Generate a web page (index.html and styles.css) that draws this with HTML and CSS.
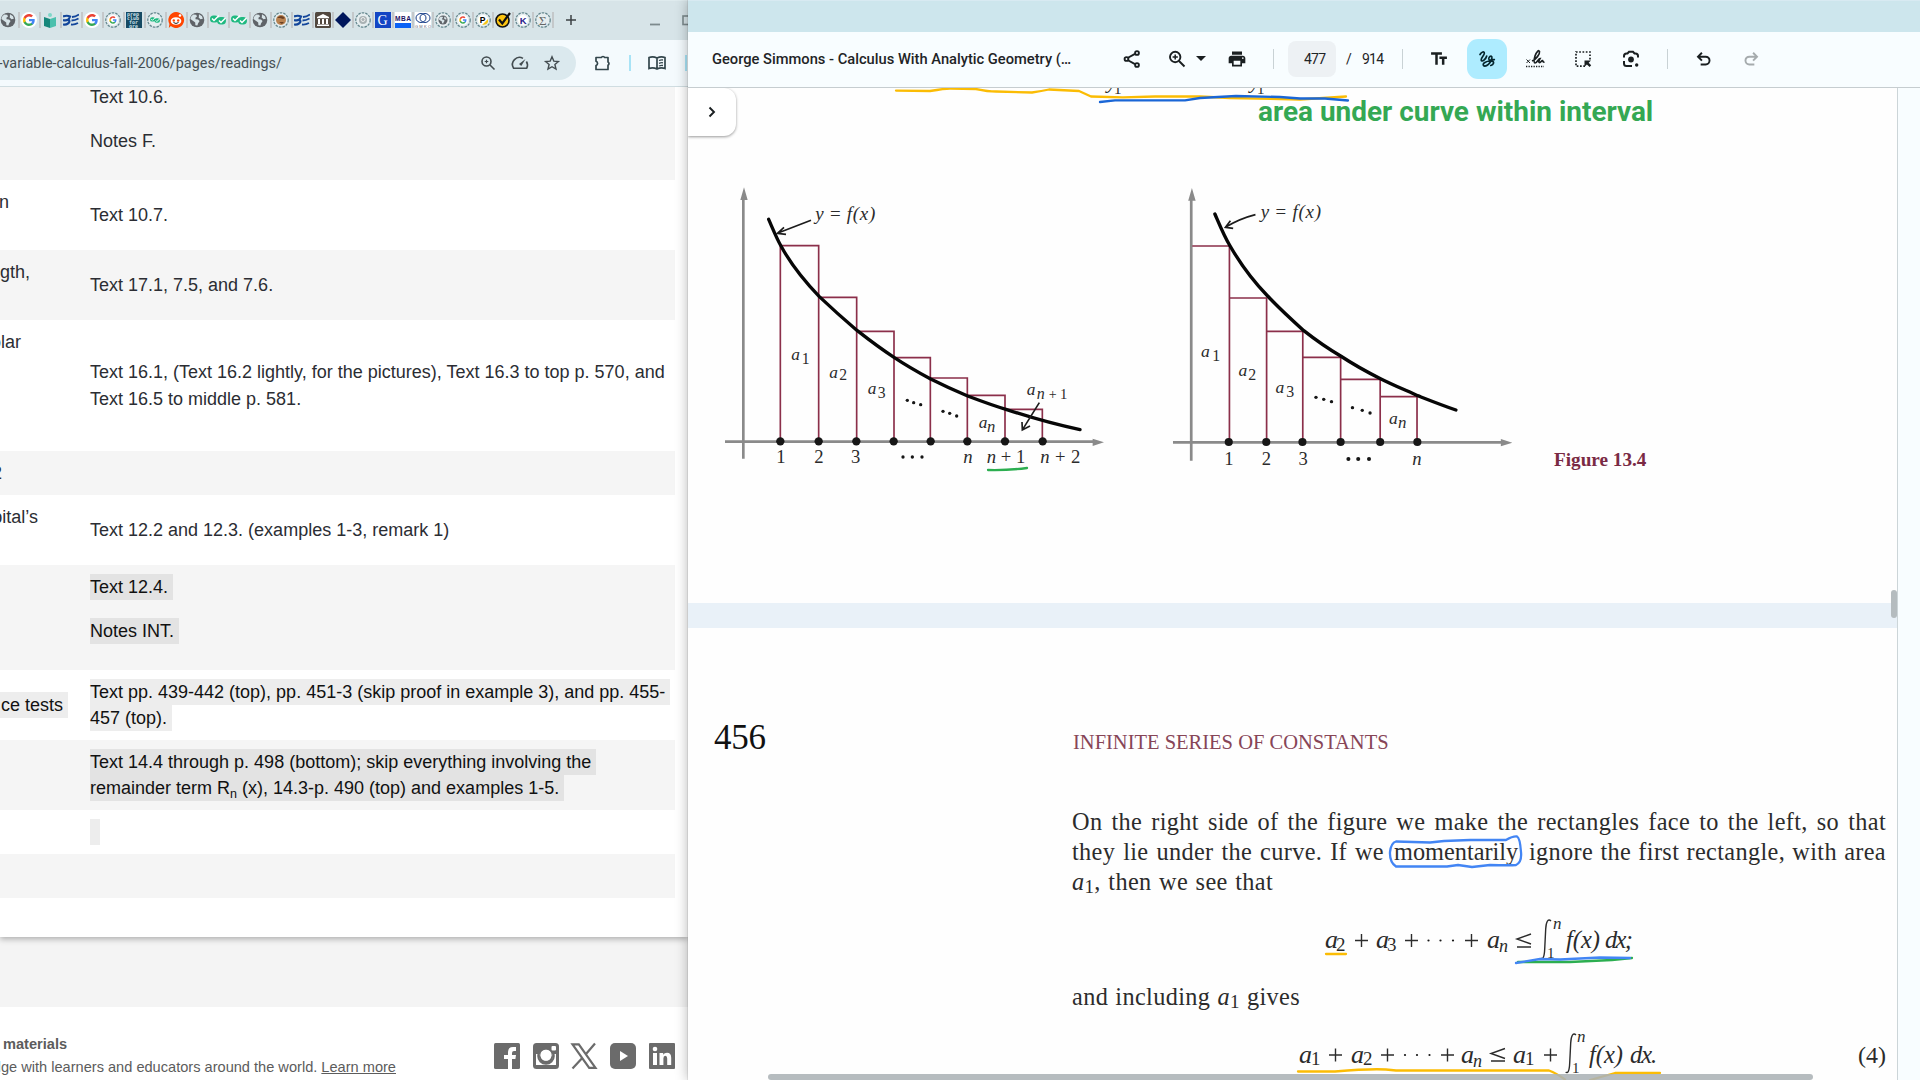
FILE: index.html
```html
<!DOCTYPE html>
<html lang="en">
<head>
<meta charset="utf-8">
<title>Readings</title>
<link rel="stylesheet" href="styles.css">
</head>
<body>
<svg class="defs" width="0" height="0">
  <symbol id="globe" viewBox="0 0 16 16"><circle cx="8" cy="8" r="7.300" fill="#5f6368"/><path d="M2 4.800l2.200-2.200 3 .2.8 1.600-1.600 1.400.2 1.400 2.400.2 1.600 1.600-1.600 2.400-.6 2.200-2-.4-.2-2.800-2-1.400L1.400 7z" fill="#d7e4e8"/><path d="M10 2.200l3 2 .8 2.600-2.400.4-1.600-1.600z" fill="#d7e4e8"/></symbol>
  <symbol id="g" viewBox="0 0 24 24"><path fill="#4285f4" d="M22.560 12.250c0-.78-.07-1.530-.2-2.250H12v4.260h5.920c-.26 1.370-1.040 2.530-2.210 3.310v2.770h3.570c2.080-1.920 3.280-4.740 3.280-8.090z"/><path fill="#34a853" d="M12 23c2.970 0 5.460-.98 7.280-2.660l-3.570-2.770c-.98.66-2.230 1.060-3.710 1.060-2.860 0-5.290-1.930-6.160-4.530H2.180v2.840C3.990 20.530 7.700 23 12 23z"/><path fill="#fbbc05" d="M5.840 14.090c-.22-.66-.35-1.360-.35-2.090s.13-1.430.35-2.090V7.070H2.180C1.430 8.550 1 10.220 1 12s.43 3.450 1.180 4.930z"/><path fill="#ea4335" d="M12 5.380c1.620 0 3.060.56 4.210 1.640l3.150-3.150C17.450 2.090 14.970 1 12 1 7.700 1 3.990 3.470 2.180 7.070l3.660 2.840c.87-2.600 3.300-4.530 6.160-4.530z"/></symbol>
  <symbol id="gdisc" viewBox="0 0 16 16"><circle cx="8" cy="8" r="8" fill="#fff"/><use href="#g" x="1.500" y="1.500" width="13" height="13"/></symbol>
  <symbol id="ring" viewBox="0 0 16 16"><circle cx="8" cy="8" r="7.200" fill="#e6eef0" stroke="#66888f" stroke-width="1.300" stroke-dasharray="2.600 1"/></symbol>
  <symbol id="gring" viewBox="0 0 16 16"><use href="#ring" width="16" height="16"/><circle cx="8" cy="8" r="5" fill="#fff"/><use href="#g" x="4" y="4" width="8" height="8"/></symbol>
  <symbol id="be" viewBox="0 0 16 16"><g fill="none" stroke="#12459a"><path stroke-width="2.200" d="M0 4.500q4-1.500 7 0L5.500 7.500Q3 9 0 8M5.500 7.500q2 2-.5 4Q3 13 0 12.500"/><path stroke-width="1.800" d="M9 5q3.500 0 7-2.500M8.500 8.500q3.500 0 7-2M8 12.500q3.500.5 7-1.500"/></g></symbol>
  <symbol id="checks" viewBox="0 0 16 16"><g fill="#1eb980"><rect x="0" y="3.500" width="8.500" height="7" rx="3.500"/><rect x="7" y="5" width="9" height="7.500" rx="3.700"/></g><path d="M2 6.500l2 2 5-5M9 8.500l2 2 4.500-4.500" fill="none" stroke="#fff" stroke-width="1.500"/></symbol>
</svg>

<div class="desktop">
  <section class="browser">
    <div class="tabs">
      <svg class="fav"><use href="#globe"/></svg><i></i>
      <svg class="fav"><use href="#gdisc"/></svg><i></i>
      <svg class="fav" viewBox="0 0 16 16"><path d="M2 5l6 2v9l-6-2z" fill="#16877b"/><path d="M14 5L8 7v9l6-2z" fill="#4bc0ad"/><circle cx="8" cy="3" r="2" fill="#7fd6c8"/></svg><i></i>
      <svg class="fav"><use href="#be"/></svg><i></i>
      <svg class="fav"><use href="#gdisc"/></svg><i></i>
      <svg class="fav"><use href="#gring"/></svg><i></i>
      <svg class="fav favtext" viewBox="0 0 16 16"><rect width="16" height="16" fill="#164a63"/><text x="1" y="4" font-size="5">prep</text><text x="1" y="8" font-size="5">club</text><text x="3" y="12" font-size="5">for</text><text x="3" y="15.500" font-size="5">gre</text></svg><i></i>
      <svg class="fav" viewBox="0 0 16 16"><use href="#ring" width="16" height="16"/><use href="#checks" x="3" y="3" width="10" height="10"/></svg><i></i>
      <svg class="fav" viewBox="0 0 16 16"><path d="M8 0a8 8 0 1 1-5.200 14L.8 16l.6-4A8 8 0 0 1 8 0z" fill="#ff4500"/><ellipse cx="8" cy="9" rx="5.300" ry="3.800" fill="#fff"/><circle cx="12" cy="3.500" r="1.300" fill="#fff"/><circle cx="5.800" cy="8.500" r="1.200" fill="#ff4500"/><circle cx="10.200" cy="8.500" r="1.200" fill="#ff4500"/><path d="M5.500 10.500q2.500 2 5 0" stroke="#222" fill="none"/></svg><i></i>
      <svg class="fav"><use href="#globe"/></svg><i></i>
      <svg class="fav"><use href="#checks"/></svg><i></i>
      <svg class="fav"><use href="#checks"/></svg><i></i>
      <svg class="fav"><use href="#globe"/></svg><i></i>
      <svg class="fav" viewBox="0 0 16 16"><use href="#ring" width="16" height="16"/><circle cx="8" cy="8" r="5" fill="#b98250"/><path d="M4 6q4-4 8 0l-2 1-3-1zM6 10l3 2 2-2z" fill="#6b4023"/></svg><i></i>
      <svg class="fav"><use href="#be"/></svg><i></i>
      <svg class="fav" viewBox="0 0 16 16"><rect width="16" height="16" rx="1.500" fill="#52483f"/><path d="M8 2l6 3v1.200H2V5zM3 7h2v5H3zm4 0h2v5H7zm4 0h2v5h-2zM2 12.600h12v1.400H2z" fill="#fff"/></svg><i class="tight"></i>
      <svg class="fav" viewBox="0 0 16 16"><path d="M8 0l8 8-8 8-8-8z" fill="#00165c"/></svg><i class="tight"></i>
      <svg class="fav" viewBox="0 0 16 16"><use href="#ring" width="16" height="16"/><circle cx="8" cy="8" r="4" fill="#a9b2b4"/><circle cx="8" cy="7.500" r="2" fill="none" stroke="#eee"/></svg><i class="tight"></i>
      <svg class="fav" viewBox="0 0 16 16"><rect width="16" height="16" fill="#1345c4"/><text x="2.500" y="13" font-size="14" class="serif" fill="#fff">G</text></svg><i class="tight"></i>
      <svg class="fav" viewBox="0 0 16 16"><rect width="16" height="16" fill="#fff"/><rect y="11" width="16" height="5" fill="#0b62f5"/><text x="0" y="8.800" font-size="6.600" font-weight="700" textLength="16" fill="#1b1464" class="sans">MBA</text></svg><i class="tight"></i>
      <svg class="fav" viewBox="0 0 16 16"><rect width="16" height="16" fill="#fff"/><g fill="none" stroke="#123a86"><ellipse cx="6" cy="6" rx="5" ry="4.500"/><ellipse cx="10" cy="6" rx="5" ry="4.500"/></g><text x="0" y="15.500" font-size="4" textLength="16" fill="#667" class="sans">GMKO</text></svg><i class="tight"></i>
      <svg class="fav" viewBox="0 0 16 16"><use href="#ring" width="16" height="16"/><use href="#globe" x="3" y="3" width="10" height="10"/></svg><i class="tight"></i>
      <svg class="fav"><use href="#gring"/></svg><i class="tight"></i>
      <svg class="fav" viewBox="0 0 16 16"><use href="#ring" width="16" height="16"/><circle cx="8" cy="8" r="5" fill="#fff"/><path d="M7 13l6-6v3q-1 3-6 3z" fill="#f5c518"/><text x="4.700" y="10.500" font-size="8.500" font-weight="700" class="sans">P</text></svg><i class="tight"></i>
      <svg class="fav" viewBox="0 0 16 16"><circle cx="7.500" cy="8.500" r="6.500" fill="#fdc511" stroke="#111" stroke-width="1.600"/><path d="M4 7.500l3.300 4L15 1" fill="none" stroke="#111" stroke-width="2.200"/></svg><i class="tight"></i>
      <svg class="fav" viewBox="0 0 16 16"><use href="#ring" width="16" height="16"/><circle cx="8" cy="8" r="5" fill="#fff"/><text x="4.700" y="11.500" font-size="9.500" font-weight="700" fill="#2a1a8a" class="sans">K</text></svg><i class="tight"></i>
      <svg class="fav" viewBox="0 0 16 16"><use href="#ring" width="16" height="16"/><text x="4" y="12.500" font-size="13" fill="#666" class="serif">Σ</text></svg><i class="tight"></i>
      <svg class="plus" viewBox="0 0 10 10"><path d="M5 0v10M0 5h10" stroke="#3c4043" stroke-width="1.500"/></svg>
      <svg class="winbtns" viewBox="0 0 40 12"><path d="M0 10.500h10" stroke="#7d8a8d" stroke-width="1.800"/><rect x="33" y="2" width="9" height="8.500" fill="none" stroke="#7d8a8d" stroke-width="1.600"/></svg>
    </div>
    <div class="navbar">
      <div class="omnibox">
        <span class="url">e-variable-calculus-fall-2006/pages/readings/</span>
        <svg class="oi" viewBox="0 0 16 16"><g fill="none" stroke="#434c50" stroke-width="1.600"><circle cx="6.500" cy="6.500" r="4.500"/><path d="M10 10l4.500 4.500"/><path d="M6.500 4.700v3.600M4.700 6.500h3.600" stroke-width="1.200"/></g></svg>
        <svg class="oi" viewBox="0 0 16 16"><path d="M11 3.400A7 7 0 0 0 1.600 13.200H14.800A7 7 0 0 0 14.400 6.500" fill="none" stroke="#434c50" stroke-width="1.600" stroke-linejoin="round"/><path d="M7 9L13.500 4 9.300 11z" fill="#434c50"/></svg>
        <svg class="oi" viewBox="0 0 16 16"><path d="M8 1.800l1.800 4.300 4.600.4-3.500 3 1.100 4.600L8 11.700l-4 2.400 1.100-4.600-3.500-3 4.600-.4z" fill="none" stroke="#434c50" stroke-width="1.400"/></svg>
      </div>
      <svg class="ext" viewBox="0 0 18 18"><path d="M2 3.500h5.300a1.800 1.500 0 0 1 3.400 0H14V8a1.800 1.800 0 0 1 0 3.200V15.500H2v-4a2.200 2.200 0 0 0 0-4.200z" fill="none" stroke="#33464c" stroke-width="1.700" stroke-linejoin="round"/></svg>
      <b class="bar"></b>
      <svg class="read" viewBox="0 0 18 16"><path d="M9 3Q5 1 1 2.500v11Q5 12 9 14q4-2 8-.5v-11Q13 1 9 3zv11" fill="none" stroke="#33464c" stroke-width="1.700"/><path d="M11 5.500q2-.8 4-.5M11 8.300q2-.8 4-.5M11 11q2-.8 4-.5" fill="none" stroke="#33464c" stroke-width="1.300"/></svg>
      <b class="bar last"></b>
    </div>
    <div class="site">
      <div class="card">
        <table class="readings">
          <tr><td></td><td><p>Text 10.6.</p><p>Notes F.</p></td></tr>
          <tr class="h2"><td class="top"><div class="frag" style="width:9px">n</div></td><td>Text 10.7.</td></tr>
          <tr class="h2"><td class="top"><div class="frag" style="width:30px">gth,</div></td><td>Text 17.1, 7.5, and 7.6.</td></tr>
          <tr class="h3"><td class="top"><div class="frag" style="width:21px">olar</div></td><td>Text 16.1, (Text 16.2 lightly, for the pictures), Text 16.3 to top p. 570, and<br>Text 16.5 to middle p. 581.</td></tr>
          <tr><td><div class="frag" style="width:2px">2</div></td><td>&nbsp;</td></tr>
          <tr class="h2"><td class="top"><div class="frag" style="width:38px">pital’s</div></td><td>Text 12.2 and 12.3. (examples 1-3, remark 1)</td></tr>
          <tr><td></td><td><p><mark>Text 12.4.</mark></p><p><mark>Notes INT.</mark></p></td></tr>
          <tr><td><div class="frag" style="width:68px"><mark class="lead">ce tests</mark></div></td><td><mark>Text pp. 439-442 (top), pp. 451-3 (skip proof in example 3), and pp. 455-<br>457 (top).</mark></td></tr>
          <tr><td></td><td><mark>Text 14.4 through p. 498 (bottom); skip everything involving the<br>remainder term R<sub>n</sub> (x), 14.3-p. 490 (top) and examples 1-5.</mark></td></tr>
          <tr><td></td><td><mark>&nbsp;</mark></td></tr>
          <tr><td></td><td>&nbsp;</td></tr>
        </table>
      </div>
      <footer class="footer">
        <div class="blurb"><strong>materials</strong><div class="frag line">dge with learners and educators around the world.&nbsp;<u>Learn more</u></div></div>
        <div class="social">
          <svg viewBox="0 0 26 26"><rect width="26" height="26" rx="1.500" fill="#6b6b6b"/><path d="M14 26V16h-4v-4h4V9q0-5 5-5h3v4h-2q-2 0-2 2v2h4l-.6 4H18v10z" fill="#fff"/></svg>
          <svg viewBox="0 0 26 26"><rect width="26" height="26" rx="3.500" fill="#6b6b6b"/><path d="M3 11v11h20V11h-3.500a7 7 0 1 1-13 0z" fill="#fff"/><circle cx="13" cy="12" r="5.600" fill="#fff"/><circle cx="13" cy="13" r="7.800" fill="none" stroke="#6b6b6b" stroke-width="2"/><circle cx="13" cy="12.500" r="5.300" fill="#fff"/><rect x="18.500" y="3" width="4.500" height="4.500" rx="1" fill="#fff"/></svg>
          <svg viewBox="0 0 26 26"><path d="M1.500 1.300h6.300L24.500 24.800h-6.300zM24 .5L15 11M10.800 15.500L1.500 25.500" fill="none" stroke="#6b6b6b" stroke-width="2.200"/></svg>
          <svg viewBox="0 0 26 26"><rect width="26" height="26" rx="5" fill="#6b6b6b"/><path d="M10 8l8 5-8 5z" fill="#fff"/></svg>
          <svg viewBox="0 0 26 26"><rect width="26" height="26" rx="1" fill="#6b6b6b"/><path d="M4 10h4v12H4zM10.500 10h3.700v1.700q1.200-2 3.800-2 4.200 0 4.200 5V22h-4v-6.500q0-2.700-1.900-2.700t-1.900 2.700V22h-3.900z" fill="#fff"/><circle cx="6" cy="6" r="2.300" fill="#fff"/></svg>
        </div>
      </footer>
    </div>
  </section>

  <section class="pdf">
    <div class="titlebar"></div>
    <div class="pdfbar">
      <span class="doc">George Simmons - Calculus With Analytic Geometry (…</span>
      <svg class="ic share" viewBox="0 0 20 20"><g fill="none" stroke="#1a1f21" stroke-width="1.900"><path d="M5.500 9L13 4.800M5.500 11L13 15.200"/><circle cx="15" cy="4" r="1.900"/><circle cx="4.500" cy="10" r="1.900"/><circle cx="15" cy="16" r="1.900"/></g></svg>
      <svg class="ic zoom" viewBox="0 0 20 20"><g fill="none" stroke="#1a1f21" stroke-width="1.900"><circle cx="8.200" cy="8" r="5.200"/><path d="M12 12l5.500 5.500"/><path d="M8.200 5.400v5.200M5.600 8h5.200" stroke-width="1.500"/></g></svg>
      <svg class="caret" viewBox="0 0 10 5"><path d="M0 0h10L5 5z" fill="#1a1f21"/></svg>
      <svg class="ic print" viewBox="0 0 24 24"><path d="M19 8H5c-1.660 0-3 1.340-3 3v6h4v4h12v-4h4v-6c0-1.660-1.340-3-3-3zm-3 11H8v-5h8v5zm3-7c-.55 0-1-.45-1-1s.45-1 1-1 1 .45 1 1-.45 1-1 1zm-1-9H6v4h12V3z" fill="#1a1f21"/></svg>
      <b class="sep s1"></b>
      <span class="pageno">477</span><span class="slash">/</span><span class="total">914</span>
      <b class="sep s2"></b>
      <svg class="ic tt" viewBox="0 0 24 24"><path d="M2.500 4v3h5v12h3V7h5V4h-13zm19 5h-9v3h3v7h3v-7h3V9z" fill="#1a1f21"/></svg>
      <span class="active"><svg class="ic" viewBox="0 0 20 20"><path d="M3 5.500C4.500 3 7.500 1.800 7.300 4.500 7 7 4 8.500 4.200 11c.5 3 5-1.500 5.500-4M6.500 16.500c1.500 1.300 4.500 0 6.500-3 2-3 2.500-6 1.300-6.300-1.800-.3-3.500 2.800-2 3.700 1.200.7 3.500-.5 5-.2M6.500 16.500c-1.500-2 3-4.500 6.500-4.500 3 0 4 .7 3.500 2.300-.4 1.300-1.500 1.900-2.700 2.200" fill="none" stroke="#05262e" stroke-width="1.700" stroke-linecap="round"/></svg></span>
      <svg class="ic sign" viewBox="0 0 20 20"><path d="M1.500 10.500l3.500 3.500m0-3.500L1.500 14" stroke="#1a1f21" stroke-width="1"/><path d="M7 12c4-1.500 8-7 7.500-9.500C14 .5 11.500 2.500 10 7c-1 3.500-1.500 6.500 0 7 2 .3 3.500-4.500 5-4.500-1.500 2.500-1.500 4.500 0 4 1-.3 1.500-2 2.500-2 .5 1.500 1 1.800 2 1.500" fill="none" stroke="#1a1f21" stroke-width="1.700"/><path d="M1 17.500h18" stroke="#1a1f21" stroke-width="1.300" stroke-dasharray="1.300 1.200"/></svg>
      <svg class="ic sel" viewBox="0 0 20 20"><path d="M12 17.200H3V3h14v9" fill="none" stroke="#1a1f21" stroke-width="1.700" stroke-dasharray="1.700 1.600"/><path d="M11.500 11.500H18l-2.300 2.200 2.500 2.600-1.600 1.700-2.700-2.600-2.400 2.400z" fill="#1a1f21"/></svg>
      <svg class="ic lens" viewBox="0 0 20 20"><g fill="none" stroke="#1a1f21" stroke-width="2"><path d="M3 8.500V7q0-2.500 2.500-2.500h1L8 2.800h4l1.500 1.700h1Q17 4.500 17 7v1.500M3 12v2.500Q3 17 5.500 17H11"/></g><circle cx="10" cy="10.500" r="2.900" fill="#1a1f21"/><circle cx="15.700" cy="16" r="1.700" fill="#1a1f21"/></svg>
      <b class="sep s3"></b>
      <svg class="ic undo" viewBox="0 0 24 24"><path d="M8 18.500h6a4.500 4.500 0 0 0 0-9.300H5M9.500 4.500L4.800 9.200l4.700 4.700" fill="none" stroke="#1a1f21" stroke-width="2.300"/></svg>
      <svg class="ic redo" viewBox="0 0 24 24"><path d="M16 18.500h-6a4.500 4.500 0 0 1 0-9.300h9M14.500 4.500l4.700 4.700-4.700 4.700" fill="none" stroke="#a5abad" stroke-width="2.300"/></svg>
    </div>
    <div class="viewer">
      <div class="pages">
        <div class="page one">
          <div class="note">area under curve within interval</div>
          <div class="figrow">
            <svg class="fig" width="430" height="310" viewBox="0 0 1290 930">
              <g stroke="#8a8a8a" stroke-width="8" fill="#8a8a8a"><path d="M130 866V85M75 815h1105"/><path d="M132 52l-11 38h22zM1212 817l-34-11v22z" stroke="none"/></g>
              <path class="rects" d="M241 812V227H356V812M356 382H470V812M470 484H582V812M582 563H691V812M691 624H802V812M802 676H915V812M915 718H1027V812"/>
              <path class="curve" d="M206 148C220 180 230 205 243 228C275 287 315 335 358 380C400 420 440 455 472 482C510 512 545 538 582 562C615 584 655 607 692 627C730 646 765 662 803 678C840 692 880 707 918 718C990 742 1060 762 1140 779"/>
              <g class="dots"><circle cx="241" cy="814" r="12.500"/><circle cx="356" cy="814" r="12.500"/><circle cx="469" cy="814" r="12.500"/><circle cx="581" cy="814" r="12.500"/><circle cx="692" cy="814" r="12.500"/><circle cx="802" cy="814" r="12.500"/><circle cx="915" cy="814" r="12.500"/><circle cx="1028" cy="814" r="12.500"/></g>
              <g class="dots"><circle cx="622" cy="691" r="5"/><circle cx="641" cy="698" r="5"/><circle cx="662" cy="704" r="5"/><circle cx="729" cy="724" r="5"/><circle cx="749" cy="730" r="5"/><circle cx="770" cy="738" r="5"/><circle cx="609" cy="861" r="5"/><circle cx="637" cy="861" r="5"/><circle cx="666" cy="861" r="5"/></g>
              <path class="arrow" d="M333 151L232 190M252 172L232 190L258 193M1018 698L968 778M966 756L967 780L990 768"/>
              <g class="lab" font-size="57"><text x="346" y="150" textLength="180"><tspan>y</tspan> = <tspan>f(x)</tspan></text></g>
              <g class="lab it" font-size="52"><text x="274" y="569">a</text><text x="388" y="623">a</text><text x="503" y="672">a</text><text x="836" y="774">a</text><text x="980" y="676">a</text><text x="861" y="786" font-size="50">n</text><text x="1010" y="686" font-size="48">n</text></g>
              <g class="lab" font-size="47"><text x="305" y="582">1</text><text x="418" y="631">2</text><text x="533" y="683">3</text><text x="1046" y="686" font-size="42">+</text><text x="1080" y="686" font-size="44">1</text></g>
              <g class="lab" font-size="56"><text x="229" y="880">1</text><text x="343" y="880">2</text><text x="453" y="880">3</text><text x="790" y="880" class="it">n</text><text x="860" y="880" textLength="116"><tspan class="it">n</tspan> + 1</text><text x="1021" y="880" textLength="120"><tspan class="it">n</tspan> + 2</text></g>
            </svg>
            <svg class="fig second" width="400" height="310" viewBox="0 0 1200 930">
              <g transform="scale(1.014 1)">
              <g stroke="#8a8a8a" stroke-width="8" fill="#8a8a8a"><path d="M122 872V85M68 817h980"/><path d="M124 54l-11 38h22zM1072 818l-34-11v22z" stroke="none"/></g>
              <path class="rects" d="M125 228H235V812M235 384H345V812M345 484H452V812M452 562H564V812M564 628H681V812M681 680H790V812"/>
              <path class="curve" d="M192 132C206 165 220 200 237 228C270 286 305 333 348 378C385 418 420 450 455 482C490 510 525 535 564 558C600 582 640 605 682 626C715 643 755 660 792 677C830 692 865 706 905 720"/>
              <g class="dots"><circle cx="233" cy="816" r="12"/><circle cx="344" cy="816" r="12"/><circle cx="451" cy="816" r="12"/><circle cx="564" cy="816" r="12"/><circle cx="681" cy="816" r="12"/><circle cx="791" cy="816" r="12"/></g>
              <g class="dots"><circle cx="491" cy="682" r="5"/><circle cx="514" cy="688" r="5"/><circle cx="537" cy="695" r="5"/><circle cx="599" cy="713" r="5"/><circle cx="628" cy="721" r="5"/><circle cx="651" cy="729" r="5"/><circle cx="587" cy="867" r="6"/><circle cx="616" cy="867" r="6"/><circle cx="648" cy="867" r="6"/></g>
              <path class="arrow" d="M312 134Q265 146 223 172M238 152L223 172L246 175"/>
              <g class="lab" font-size="56"><text x="328" y="143" textLength="178"><tspan>y</tspan> = <tspan>f(x)</tspan></text></g>
              <g class="lab it" font-size="52"><text x="151" y="562">a</text><text x="262" y="617">a</text><text x="371" y="669">a</text><text x="707" y="762">a</text><text x="734" y="774" font-size="50">n</text><text x="776" y="884" font-size="55">n</text></g>
              <g class="lab" font-size="47"><text x="184" y="574">1</text><text x="291" y="629">2</text><text x="403" y="682">3</text></g>
              <g class="lab" font-size="55"><text x="220" y="884">1</text><text x="331" y="884">2</text><text x="439" y="884">3</text></g>
              </g>
            </svg>
            <div class="caption">Figure 13.4</div>
          </div>
        </div>
        <div class="page two">
          <div class="running"><span class="folio">456</span><span class="head">INFINITE SERIES OF CONSTANTS</span></div>
          <div class="body">
            <div class="ln">On the right side of the figure we make the rectangles face to the left, so that</div>
            <div class="split"><span class="ln w1">they lie under the curve. If we</span><span class="ln w2">momentarily</span><span class="ln w3">ignore the first rectangle, with area</span></div>
            <div class="ln w4"><i>a</i><sub>1</sub>, then we see that</div>
            <svg class="eq e1" width="814" height="80" viewBox="1072 901 814 80">
              <g class="lab it" font-size="26"><text x="1325" y="947">a</text><text x="1376" y="947">a</text><text x="1487" y="947">a</text><text x="1499" y="951" font-size="18">n</text><text x="1553" y="928" font-size="17">n</text><text x="1566" y="947" font-size="24.500" textLength="34">f(x)</text><text x="1605" y="947" font-size="24.500" textLength="28">dx;</text></g>
              <g class="lab" font-size="19"><text x="1336" y="949.500">2</text><text x="1387" y="949.500">3</text><text x="1547" y="957" font-size="15">1</text></g>
              <g class="sym"><path d="M1355 939.500h13M1361.500 933v13M1405 939.500h13M1411.500 933v13M1465 939.500h13M1471.500 933v13M1531 933l-14 5 14 5M1517 946h14"/><path d="M1551 920c-3-3-5 1-5.300 8l-1 20c-.3 8-2 11-4 9"/></g>
              <g class="dots"><circle cx="1428.500" cy="939.500" r="1.100"/><circle cx="1440.500" cy="939.500" r="1.100"/><circle cx="1453" cy="939.500" r="1.100"/></g>
            </svg>
            <div class="ln w5">and including <i>a</i><sub>1</sub> gives</div>
            <svg class="eq e2" width="814" height="64" viewBox="1072 1016 814 64">
              <g class="lab it" font-size="26"><text x="1299" y="1063">a</text><text x="1351" y="1063">a</text><text x="1461" y="1063">a</text><text x="1473" y="1067" font-size="18">n</text><text x="1513" y="1063">a</text><text x="1577" y="1042" font-size="17">n</text><text x="1589" y="1063" font-size="24.500" textLength="34">f(x)</text><text x="1630" y="1063" font-size="24.500" textLength="27">dx.</text></g>
              <g class="lab" font-size="19"><text x="1311" y="1065">1</text><text x="1363" y="1065">2</text><text x="1525" y="1065">1</text><text x="1572" y="1073" font-size="15">1</text><text x="1858" y="1063" font-size="24" textLength="28">(4)</text></g>
              <g class="sym"><path d="M1329 1055h13M1335.500 1048.500v13M1381 1055h13M1387.500 1048.500v13M1441 1055h13M1447.500 1048.500v13M1544 1055h13M1550.500 1048.500v13M1505 1048.500l-14 5 14 5M1491 1061h14"/><path d="M1576 1035c-3-3-5 1-5.300 8l-1 20c-.3 8-2 11-4 9"/></g>
              <g class="dots"><circle cx="1405" cy="1055" r="1.100"/><circle cx="1417" cy="1055" r="1.100"/><circle cx="1429.500" cy="1055" r="1.100"/></g>
            </svg>
          </div>
        </div>
      </div>
      <svg class="ink" viewBox="688 88 1232 992">
        <g class="lab"><text x="1107" y="88" font-size="22" class="it">y</text><text x="1114" y="93.500" font-size="15">1</text><text x="1250" y="88" font-size="22" class="it">y</text><text x="1257" y="93.500" font-size="15">1</text></g>
        <g fill="none" stroke-width="2.300" stroke-linecap="round" stroke-linejoin="round">
          <path stroke="#fbbc04" d="M896 90.600L930 91Q945 88.500 950 88.500L976 89Q988 91.500 996 91.500L1032 92.500Q1042 91 1049 89.500L1079 91L1091 96.500L1123 97.300L1155 96.500L1200 96.500L1230 98L1280 99L1300 99.500L1346 96.500M1326 954h20M1298 1071.500L1335 1071.500Q1370 1068.500 1386 1069.500L1396 1070.500H1549Q1556 1073 1565 1079.500M1590 1080L1615 1073L1660 1073"/>
          <path stroke="#1a66d6" d="M1100 102L1115 100.300H1185L1200 98L1236 96L1280 97L1300 98.500L1325 98.500L1348 100.500"/>
          <path stroke="#2cae50" d="M988 470Q1008 470.500 1027 468M1518 962L1570 962L1612 960L1632 958"/>
          <path stroke="#4285f4" d="M1516 963L1540 959L1560 959.500L1600 957.500L1630 958M1396 841.500Q1391 843 1390 852Q1389.500 862 1396 866.500L1447 866.500L1458 865L1472 867L1490 865Q1510 865.500 1516 865Q1522 862 1521 852Q1520 838 1517 836.500Q1513 836 1506 840L1470 840L1444 841L1430 842.500Z"/>
        </g>
      </svg>
      <div class="drawer"><svg viewBox="0 0 8 12"><path d="M1.500 1.500L6 6l-4.500 4.500" fill="none" stroke="#1a1f21" stroke-width="1.900"/></svg></div>
      <div class="vthumb"></div>
      <div class="hthumb"></div>
    </div>
  </section>
</div>
</body>
</html>
```
FILE: styles.css
```css
* { box-sizing: border-box; }
body { margin: 0; background: #fff; overflow: hidden; font-family: "Liberation Sans", Arial, sans-serif; }
svg { display: block; flex: none; overflow: visible; }
.defs { position: absolute; }
.desktop { display: flex; width: 1920px; height: 1080px; overflow: hidden; }
.sans { font-family: "Liberation Sans", sans-serif; }
.serif { font-family: "Liberation Serif", serif; }

/* left browser window */
.browser { width: 688px; height: 1080px; overflow: hidden; display: flex; flex-direction: column; flex: none; }
.tabs { height: 40px; background: #d7e4e8; box-shadow: inset 0 1px #dfebee; display: flex; align-items: center; flex: none; }
.fav { width: 16px; height: 16px; }
.favtext { fill: #cfe3ea; font-family: "DejaVu Sans Mono", monospace; font-weight: 700; }
.tabs i { width: 2px; height: 16px; margin: 0 1px 0 2px; background: #c4c8ca; flex: none; }
.tabs i.tight { margin: 0 1px; }
.plus { width: 10px; height: 10px; margin-left: 11px; }
.winbtns { width: 40px; height: 12px; margin-left: 74px; }
.navbar { height: 47px; background: #f4fafd; border-bottom: 1px solid #d0dde1; display: flex; align-items: center; flex: none; }
.omnibox { width: 576px; height: 34px; background: #dbe9ee; border-radius: 0 17px 17px 0; display: flex; align-items: center; gap: 16px; flex: none; }
.url { width: 282px; margin-right: 182px; display: flex; justify-content: flex-end; white-space: nowrap; font: 14.400px Roboto, sans-serif; color: #454f53; }
.oi { width: 16px; height: 16px; }
.ext { width: 18px; height: 18px; margin-left: 18px; }
.bar { width: 2px; height: 16px; background: #a8e3f6; margin-left: 34px; margin-right: 17px; }
.ext + .bar { margin-left: 17px; }
.read { width: 18px; height: 16px; }
.bar.last { margin: 0 0 0 19px; }
.site { flex: 1; background: #f4f4f4; overflow: hidden; color: #2b2d33; }
.card { height: 850px; background: #fff; overflow: hidden; box-shadow: 0 2px 6px rgba(0,0,0,.3); position: relative; }
.readings { border-collapse: collapse; width: 675px; margin-top: -12px; font-size: 18px; line-height: 26.250px; table-layout: fixed; }
.readings tr:nth-child(odd) { background: #f5f5f5; }
.readings td { padding: 8.750px 0 8.750px 9px; vertical-align: middle; white-space: nowrap; }
.readings td:first-child { width: 81px; padding-left: 0; }
.readings td.top { vertical-align: top; }
.readings p { margin: 0 0 17.500px; }
.h2 { height: 70px; }
.h3 { height: 131.250px; }
.frag { display: flex; justify-content: flex-end; white-space: nowrap; }
mark { background: rgba(0,0,0,.07); color: #111; padding: 3px 5px 3px 0; -webkit-box-decoration-break: clone; box-decoration-break: clone; }
mark.lead { padding: 0 5px 0 8px; }
sub { font-size: 12.500px; line-height: 0; vertical-align: -4px; }
.footer { margin-top: 70px; height: 80px; background: #fff; display: flex; justify-content: space-between; padding: 26px 13px 0 0; font-size: 14.600px; color: #5c5c5c; }
.blurb { width: 396px; line-height: 23px; }
.blurb strong { margin-left: 3px; }
.social { display: flex; gap: 12.800px; padding-top: 10px; }
.social svg { width: 26px; height: 26px; }

/* right document viewer */
.pdf { width: 1232px; height: 1080px; position: relative; box-shadow: 0 0 12px rgba(0,0,0,.3), 0 0 1px rgba(0,0,0,.4); background: #f8fdff; }
.titlebar { height: 32px; background: #cde6ed; border-top: 1px solid #d8eaf2; }
.pdfbar { height: 56px; background: #f8fdff; border-bottom: 1px solid #c6cdd0; display: flex; align-items: center; padding: 0 0 2px 24px; color: #1f2426; font-family: Roboto, sans-serif; }
.doc { width: 360px; font-size: 14.700px; font-weight: 500; white-space: nowrap; }
.ic { width: 20px; height: 20px; }
.share { margin-left: 50px; }
.zoom { margin-left: 25px; }
.caret { width: 10px; height: 5px; margin-left: 9px; }
.print { margin-left: 21px; }
.sep { width: 1px; height: 20px; background: #c9d2d5; flex: none; }
.s1 { margin-left: 26px; }
.pageno { width: 48px; height: 36px; margin-left: 14px; background: #edf1f4; border-radius: 8px; line-height: 36px; padding-left: 16px; font-size: 14px; letter-spacing: -.8px; }
.slash { margin-left: 10px; width: 16px; font-size: 14px; }
.total { width: 20px; font-size: 14px; letter-spacing: -.8px; }
.s2 { margin-left: 20px; }
.tt { margin-left: 26px; }
.active { width: 40px; height: 40px; margin-left: 18px; background: #aeecff; border-radius: 11px; display: flex; align-items: center; justify-content: center; }
.sign { margin-left: 18px; }
.sel, .lens { margin-left: 28px; }
.s3 { margin-left: 26px; }
.undo { margin-left: 26px; }
.redo { margin-left: 27px; }
.viewer { height: 992px; position: relative; overflow: hidden; }
.pages { width: 1210px; border-right: 1px solid #ccd5d8; background: #e9f1f8; }
.page { background: #fefefe; }
.one { height: 515px; padding-top: 8px; overflow: hidden; }
.note { margin-left: 570px; height: 32px; width: 400px; white-space: nowrap; font: 700 27.950px/32px Roboto, sans-serif; color: #34a853; }
.figrow { display: flex; margin: 42px 0 0 12px; }
.second { margin-left: 20px; }
.fig { font-family: "Liberation Serif", serif; }
.lab { font-family: "Liberation Serif", serif; fill: #2b2b2b; }
.it, .lab tspan { font-style: italic; }
.rects { fill: none; stroke: #8b2f4a; stroke-width: 5; }
.curve { fill: none; stroke: #060606; stroke-width: 10; stroke-linecap: round; }
.dots { fill: #161616; }
.arrow { fill: none; stroke: #1c1c1c; stroke-width: 5; }
.caption { margin: 278px 0 0 4px; font: 700 19.200px/24px "Liberation Serif", serif; color: #7a2a44; white-space: nowrap; }
.two { margin-top: 25px; height: 452px; padding-top: 90px; font-family: "Liberation Serif", serif; color: #2c2c2c; }
.running { display: flex; align-items: baseline; height: 89px; line-height: 40px; }
.folio { margin-left: 26px; width: 52px; font-size: 35px; letter-spacing: -.3px; color: #111; }
.head { margin-left: 307px; font-size: 20.500px; letter-spacing: 0; color: #874557; white-space: nowrap; }
.body { margin-left: 384px; width: 814px; font-size: 24.300px; line-height: 30px; letter-spacing: .35px; }
.ln { display: block; text-align: justify; text-align-last: justify; white-space: nowrap; height: 30px; }
.split { display: flex; justify-content: space-between; }
.w1 { width: 312px; }
.w2 { width: 125px; margin-right: 4px; margin-left: 4px; letter-spacing: 0; }
.w3 { width: 357px; }
.w4 { width: 201px; }
.w5 { width: 228px; }
.body sub { font-size: 19px; vertical-align: -3px; }
.eq { letter-spacing: 0; }
.e1 { margin-top: 5px; }
.e2 { margin-top: 4px; }
.sym { fill: none; stroke: #2c2c2c; stroke-width: 1.400; }
.ink { position: absolute; left: 0; top: 0; width: 1232px; height: 992px; overflow: hidden; }
.drawer { position: absolute; left: 0; top: 0; width: 48px; height: 48px; background: #fff; border-radius: 0 12px 12px 0; box-shadow: 0 1px 3px rgba(0,0,0,.4); display: flex; align-items: center; padding-left: 20px; }
.drawer svg { width: 8px; height: 12px; }
.vthumb { position: absolute; left: 1203px; top: 502px; width: 6px; height: 28px; border-radius: 3px; background: #b5bcbf; }
.hthumb { position: absolute; left: 80px; bottom: 0; width: 1045px; height: 6px; border-radius: 3px; background: rgba(172,179,182,.88); }
```
